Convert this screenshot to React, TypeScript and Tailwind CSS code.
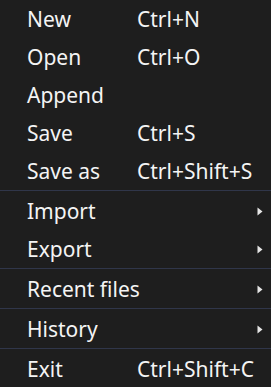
import { Fragment } from "react"

type Item = {
  label: string
  shortcut?: string
  submenu?: boolean
}

const groups: Item[][] = [
  [
    { label: "New", shortcut: "Ctrl+N" },
    { label: "Open", shortcut: "Ctrl+O" },
    { label: "Append" },
    { label: "Save", shortcut: "Ctrl+S" },
    { label: "Save as", shortcut: "Ctrl+Shift+S" },
  ],
  [
    { label: "Import", submenu: true },
    { label: "Export", submenu: true },
  ],
  [{ label: "Recent files", submenu: true }],
  [{ label: "History", submenu: true }],
  [{ label: "Exit", shortcut: "Ctrl+Shift+C" }],
]

function Arrow() {
  return (
    <svg width="6" height="9" viewBox="0 0 6 9" className="fill-[#e6e6e6] shrink-0">
      <path d="M0.5 0.5 L5.5 4.5 L0.5 8.5 Z" />
    </svg>
  )
}

export default function App() {
  return (
    <div
      className="w-[271px] h-[387px] bg-[#1e1e1e] text-[#f4f4f4] text-[21px] overflow-hidden"
      style={{ fontFamily: '"Noto Sans", "Open Sans", sans-serif' }}
    >
      {groups.map((group, gi) => (
        <Fragment key={gi}>
          {gi > 0 && <div className="h-px mb-px bg-[#30364a]" />}
          {group.map(item => (
            <div key={item.label} className="h-[38px] flex items-center pl-[27px] pr-[8px] whitespace-nowrap">
              <span className="w-[110px] shrink-0 leading-none">{item.label}</span>
              <span className="flex-1 leading-none">{item.shortcut}</span>
              {item.submenu && <Arrow />}
            </div>
          ))}
        </Fragment>
      ))}
    </div>
  )
}
